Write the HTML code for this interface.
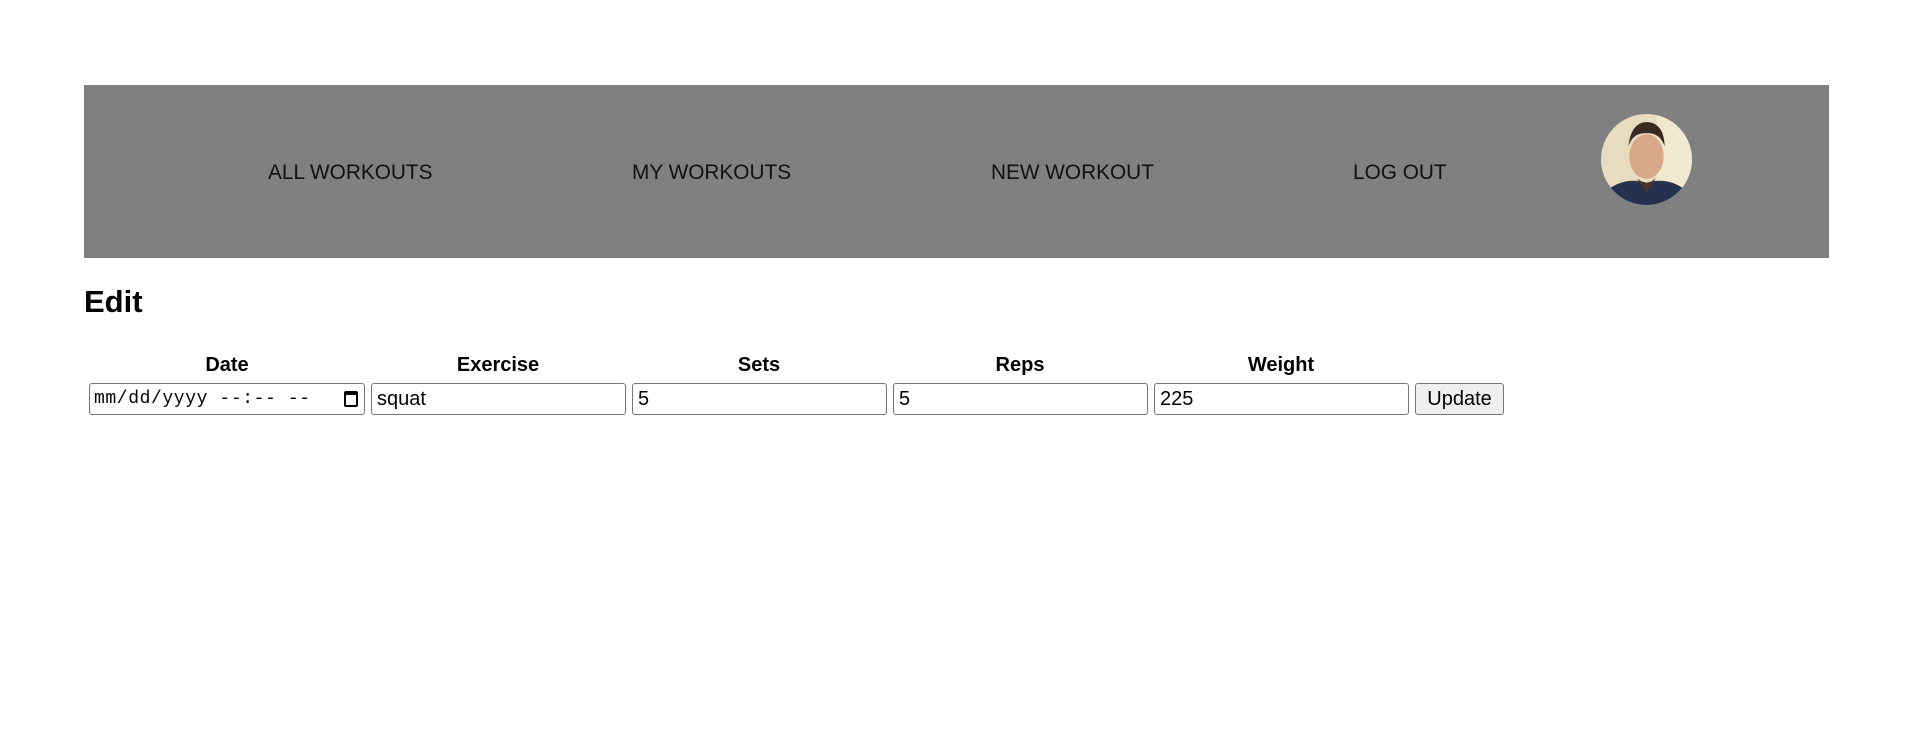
<!DOCTYPE html>
<html><head><style>
body{margin:0;width:1909px;height:748px;background:#fff;font-family:"Liberation Sans",Arial,sans-serif;position:relative;overflow:hidden}
.bar{position:absolute;left:84px;top:85px;width:1745px;height:173px;background:#808080}
.nav{position:absolute;top:161px;font-size:20.8px;color:#111;white-space:nowrap}
h2{position:absolute;left:84px;top:284px;margin:0;font-size:31px;font-weight:bold}
.th{position:absolute;top:354px;font-size:20px;font-weight:bold;transform:translateX(-50%)}
.in{position:absolute;top:383px;height:32px;box-sizing:border-box;border:1px solid #767676;border-radius:3px;background:#fff;font-size:20px;padding:0 5px;line-height:30px}
.btn{position:absolute;top:383px;left:1415px;width:89px;height:32px;box-sizing:border-box;border:1px solid #767676;border-radius:3px;background:#efefef;font-size:20px;text-align:center;line-height:30px}
</style></head><body>
<div class="bar"></div>
<div class="nav" style="left:268px">ALL WORKOUTS</div>
<div class="nav" style="left:632px">MY WORKOUTS</div>
<div class="nav" style="left:991px">NEW WORKOUT</div>
<div class="nav" style="left:1353px">LOG OUT</div>
<svg style="position:absolute;left:1601px;top:114px" width="91" height="91" viewBox="0 0 90 90">
<defs><clipPath id="c"><ellipse cx="45" cy="45" rx="45" ry="45"/></clipPath></defs>
<g clip-path="url(#c)">
<rect width="90" height="90" fill="#e8dcc0"/>
<rect x="55" width="35" height="90" fill="#f1e8d2"/>
<ellipse cx="45" cy="42" rx="17" ry="22" fill="#d8a988"/>
<path d="M27 32 Q30 8 45 8 Q62 8 63 32 Q58 18 45 19 Q32 18 27 32Z" fill="#3a2a20"/>
<path d="M0 90 L8 74 Q25 62 45 68 Q65 62 82 74 L90 90Z" fill="#24324f"/>
<path d="M36 64 L45 78 L54 64 L48 68 L42 68Z" fill="#4a3424"/>
</g></svg>
<h2>Edit</h2>
<div class="th" style="left:227px">Date</div>
<div class="th" style="left:498px">Exercise</div>
<div class="th" style="left:759px">Sets</div>
<div class="th" style="left:1020px">Reps</div>
<div class="th" style="left:1281px">Weight</div>
<div class="in" style="left:89px;width:276px;font-family:'Liberation Mono',monospace;font-size:18px;letter-spacing:0.6px;padding-left:4px">mm/dd/yyyy --:-- --<span style="position:absolute;right:6px;top:7px;width:14px;height:16px;border:2px solid #000;border-top-width:4px;border-radius:2px;box-sizing:border-box"></span></div>
<div class="in" style="left:371px;width:255px">squat</div>
<div class="in" style="left:632px;width:255px">5</div>
<div class="in" style="left:893px;width:255px">5</div>
<div class="in" style="left:1154px;width:255px">225</div>
<div class="btn">Update</div>
</body></html>
